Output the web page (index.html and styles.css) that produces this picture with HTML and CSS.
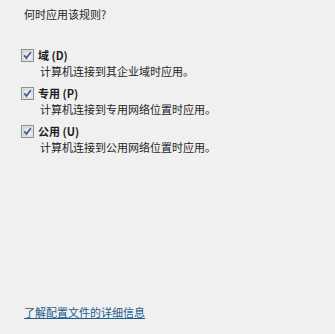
FILE: index.html
```html
<!DOCTYPE html>
<html lang="zh-CN">
<head>
<meta charset="utf-8">
<link rel="stylesheet" href="styles.css">
</head>
<body>
<div class="page">
  <div class="title">何时应用该规则?</div>
  <div class="options">
    <div class="option">
      <div class="row">
        <svg class="cb" width="13" height="13" viewBox="0 0 13 13"><defs><linearGradient id="g1" x1="0" y1="0" x2="1" y2="1"><stop offset="0" stop-color="#dcdcdc"/><stop offset="1" stop-color="#fbfbfb"/></linearGradient></defs><rect x="0.5" y="0.5" width="12" height="12" fill="#f4f4f4" stroke="#8e8f8f"/><rect x="2" y="2" width="9" height="9" fill="url(#g1)" stroke="#b6b6b6" stroke-width="0.6"/><path d="M3.3 6.4 L5.4 9 L9.8 3.2" fill="none" stroke="#40579a" stroke-width="1.7"/></svg>
        <span class="label">域 (D)</span>
      </div>
      <div class="desc">计算机连接到其企业域时应用。</div>
    </div>
    <div class="option">
      <div class="row">
        <svg class="cb" width="13" height="13" viewBox="0 0 13 13"><defs><linearGradient id="g2" x1="0" y1="0" x2="1" y2="1"><stop offset="0" stop-color="#dcdcdc"/><stop offset="1" stop-color="#fbfbfb"/></linearGradient></defs><rect x="0.5" y="0.5" width="12" height="12" fill="#f4f4f4" stroke="#8e8f8f"/><rect x="2" y="2" width="9" height="9" fill="url(#g2)" stroke="#b6b6b6" stroke-width="0.6"/><path d="M3.3 6.4 L5.4 9 L9.8 3.2" fill="none" stroke="#40579a" stroke-width="1.7"/></svg>
        <span class="label">专用 (P)</span>
      </div>
      <div class="desc">计算机连接到专用网络位置时应用。</div>
    </div>
    <div class="option">
      <div class="row">
        <svg class="cb" width="13" height="13" viewBox="0 0 13 13"><defs><linearGradient id="g3" x1="0" y1="0" x2="1" y2="1"><stop offset="0" stop-color="#dcdcdc"/><stop offset="1" stop-color="#fbfbfb"/></linearGradient></defs><rect x="0.5" y="0.5" width="12" height="12" fill="#f4f4f4" stroke="#8e8f8f"/><rect x="2" y="2" width="9" height="9" fill="url(#g3)" stroke="#b6b6b6" stroke-width="0.6"/><path d="M3.3 6.4 L5.4 9 L9.8 3.2" fill="none" stroke="#40579a" stroke-width="1.7"/></svg>
        <span class="label">公用 (U)</span>
      </div>
      <div class="desc">计算机连接到公用网络位置时应用。</div>
    </div>
  </div>
  <a class="link" href="#">了解配置文件的详细信息</a>
</div>
</body>
</html>
```
FILE: styles.css
```css
html, body {
  margin: 0;
  padding: 0;
  background: #f0f0f0;
}
.page {
  box-sizing: border-box;
  height: 334px;
  display: flex;
  flex-direction: column;
  align-items: flex-start;
  padding: 7px 0 15px 24px;
  font-family: "Noto Sans CJK SC", "Liberation Sans", sans-serif;
  font-size: 11px;
  color: #1e1e1e;
}
.title {
  line-height: 14px;
}
.options {
  margin-top: 26px;
  display: flex;
  flex-direction: column;
  gap: 6px;
}
.row {
  display: flex;
  align-items: center;
  height: 16px;
  margin-left: -3px;
}
.cb {
  display: block;
  flex: none;
}
.label {
  margin-left: 4px;
  font-weight: bold;
  line-height: 16px;
}
.desc {
  line-height: 16px;
  padding-left: 16px;
}
.link {
  margin-top: auto;
  line-height: 14px;
  color: #1c5c8a;
  text-decoration: underline;
}
```
